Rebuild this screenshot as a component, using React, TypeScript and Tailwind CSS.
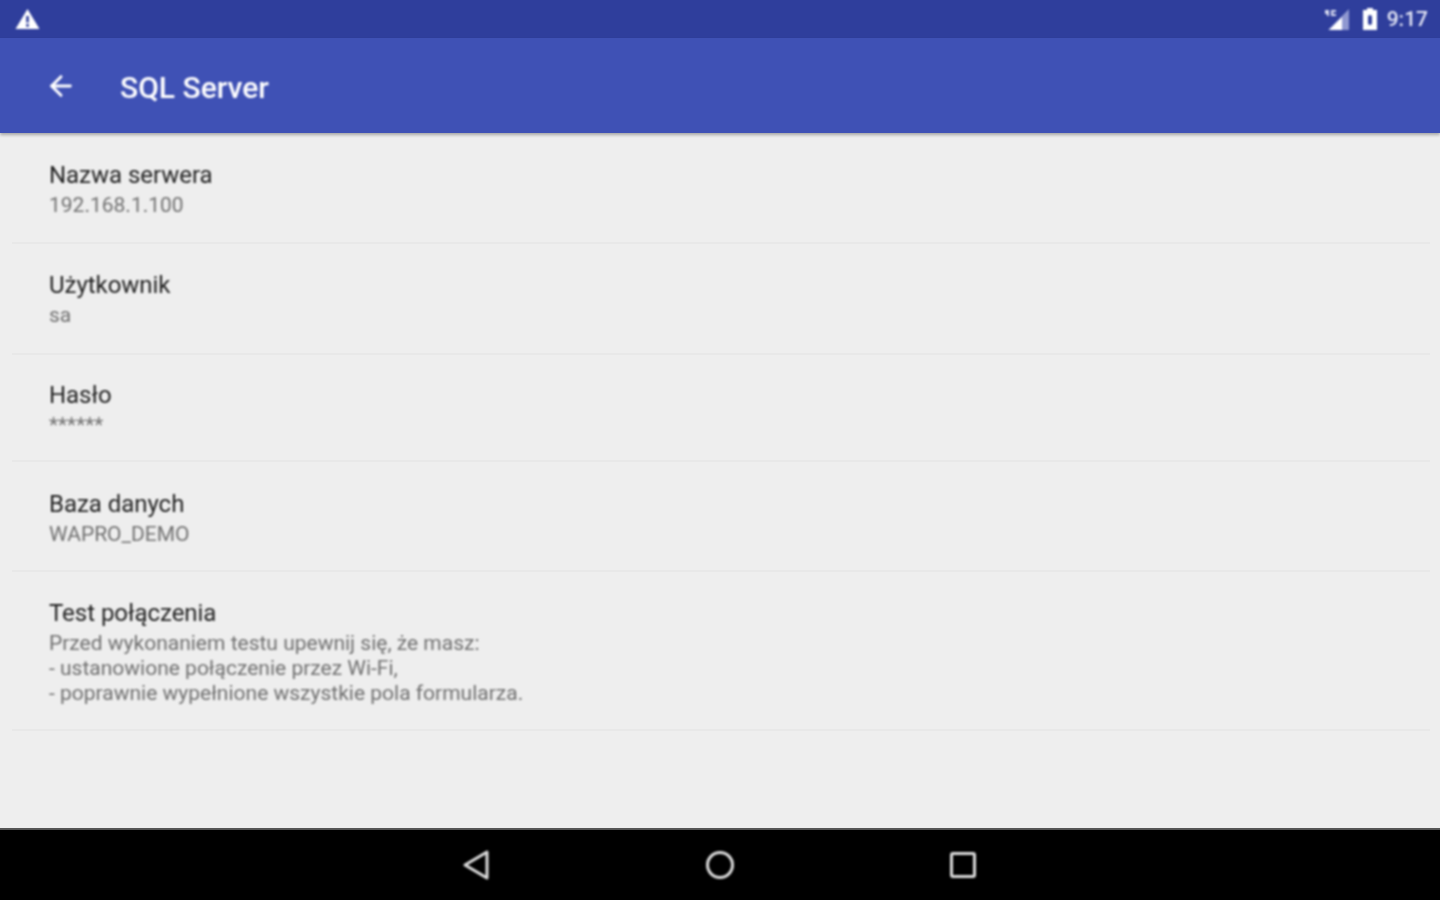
import { ArrowLeft } from "lucide-react";

const settings = [
  { title: "Nazwa serwera", lines: ["192.168.1.100"], height: "h-[110px]", pad: "pt-[26px]" },
  { title: "Użytkownik", lines: ["sa"], height: "h-[111px]", pad: "pt-[26px]" },
  { title: "Hasło", lines: ["******"], height: "h-[107px]", pad: "pt-[25px]" },
  { title: "Baza danych", lines: ["WAPRO_DEMO"], height: "h-[110px]", pad: "pt-[27px]" },
  {
    title: "Test połączenia",
    lines: [
      "Przed wykonaniem testu upewnij się, że masz:",
      "- ustanowione połączenie przez Wi-Fi,",
      "- poprawnie wypełnione wszystkie pola formularza.",
    ],
    height: "h-[159px]",
    pad: "pt-[26px]",
  },
];

function StatusBar() {
  return (
    <div className="flex h-[38px] items-center justify-between bg-[#2f3e9c] pl-[15px] pr-[12px]">
      <svg width="25" height="22" viewBox="0 0 25 22" className="mt-[-1px] blur-[0.8px]">
        <path d="M12.5 1 L24.5 21 H0.5 Z" fill="#fff" />
        <rect x="11.2" y="8" width="2.6" height="6.5" fill="#2f3e9c" />
        <rect x="11.2" y="16" width="2.6" height="2.8" fill="#2f3e9c" />
      </svg>
      <div className="flex items-center blur-[0.8px]">
        <svg width="28" height="24" viewBox="0 0 28 24">
          <path d="M25 2 V23 H4 Z" fill="#8f98d0" />
          <path d="M18 10 V23 H5 Z" fill="#fff" />
          <path d="M1 3 L5 3 L5 9 L3 9 L3 7 L1 7 Z M7 3 H12 V5 H9 V7 H12 V9 H7 Z" fill="#d8dbf0" />
        </svg>
        <svg width="16" height="24" viewBox="0 0 16 24" className="ml-[10px]">
          <path d="M5 1 H11 V3 H15 V23 H1 V3 H5 Z" fill="#fff" />
          <rect x="6" y="8" width="4" height="10" rx="2" fill="#2f3e9c" />
        </svg>
        <span className="ml-[9px] text-[21px] font-medium leading-none text-[#e6e8f6]">9:17</span>
      </div>
    </div>
  );
}

function Toolbar() {
  return (
    <div className="relative flex h-[95px] items-center bg-[#3f51b5] pl-[45px] shadow-[0_2px_3px_rgba(0,0,0,0.3)]">
      <ArrowLeft className="size-[32px] text-white blur-[0.8px]" strokeWidth={2.2} />
      <span className="ml-[43px] mt-[4px] text-[30px] font-medium leading-none text-white blur-[0.8px]">SQL Server</span>
    </div>
  );
}

function SettingRow({ title, lines, height, pad }: (typeof settings)[number]) {
  return (
    <div className={`ml-[12px] mr-[10px] border-b-2 border-[#e8e8e8] pl-[37px] ${height} ${pad}`}>
      <p className="mb-[3px] text-[24px] leading-[30px] tracking-[-0.04px] text-[#222222] blur-[0.8px]">{title}</p>
      {lines.map((line) => (
        <p key={line} className="text-[21px] leading-[25px] text-[#707070] blur-[0.8px]">
          {line}
        </p>
      ))}
    </div>
  );
}

function NavBar() {
  return (
    <div className="flex h-[72px] items-center justify-center gap-[203px] border-t-2 border-[#555555] bg-black">
      <svg width="40" height="40" viewBox="0 0 40 40" fill="none" stroke="#dddddd" strokeWidth="3" strokeLinejoin="round" className="blur-[0.8px]">
        <path d="M8 20 L30 7 V33 Z" />
      </svg>
      <svg width="40" height="40" viewBox="0 0 40 40" fill="none" stroke="#dddddd" strokeWidth="3" className="blur-[0.8px]">
        <circle cx="20" cy="20" r="12.5" />
      </svg>
      <svg width="40" height="40" viewBox="0 0 40 40" fill="none" stroke="#dddddd" strokeWidth="3" strokeLinejoin="round" className="blur-[0.8px]">
        <rect x="8.5" y="8.5" width="23" height="23" rx="1.5" />
      </svg>
    </div>
  );
}

export default function App() {
  return (
    <div className="flex h-[900px] w-[1440px] flex-col overflow-hidden bg-[#eeeeee] font-['Roboto',sans-serif]">
      <StatusBar />
      <Toolbar />
      <div className="mt-[1px] flex-1">
        {settings.map((row) => (
          <SettingRow key={row.title} {...row} />
        ))}
      </div>
      <NavBar />
    </div>
  );
}
